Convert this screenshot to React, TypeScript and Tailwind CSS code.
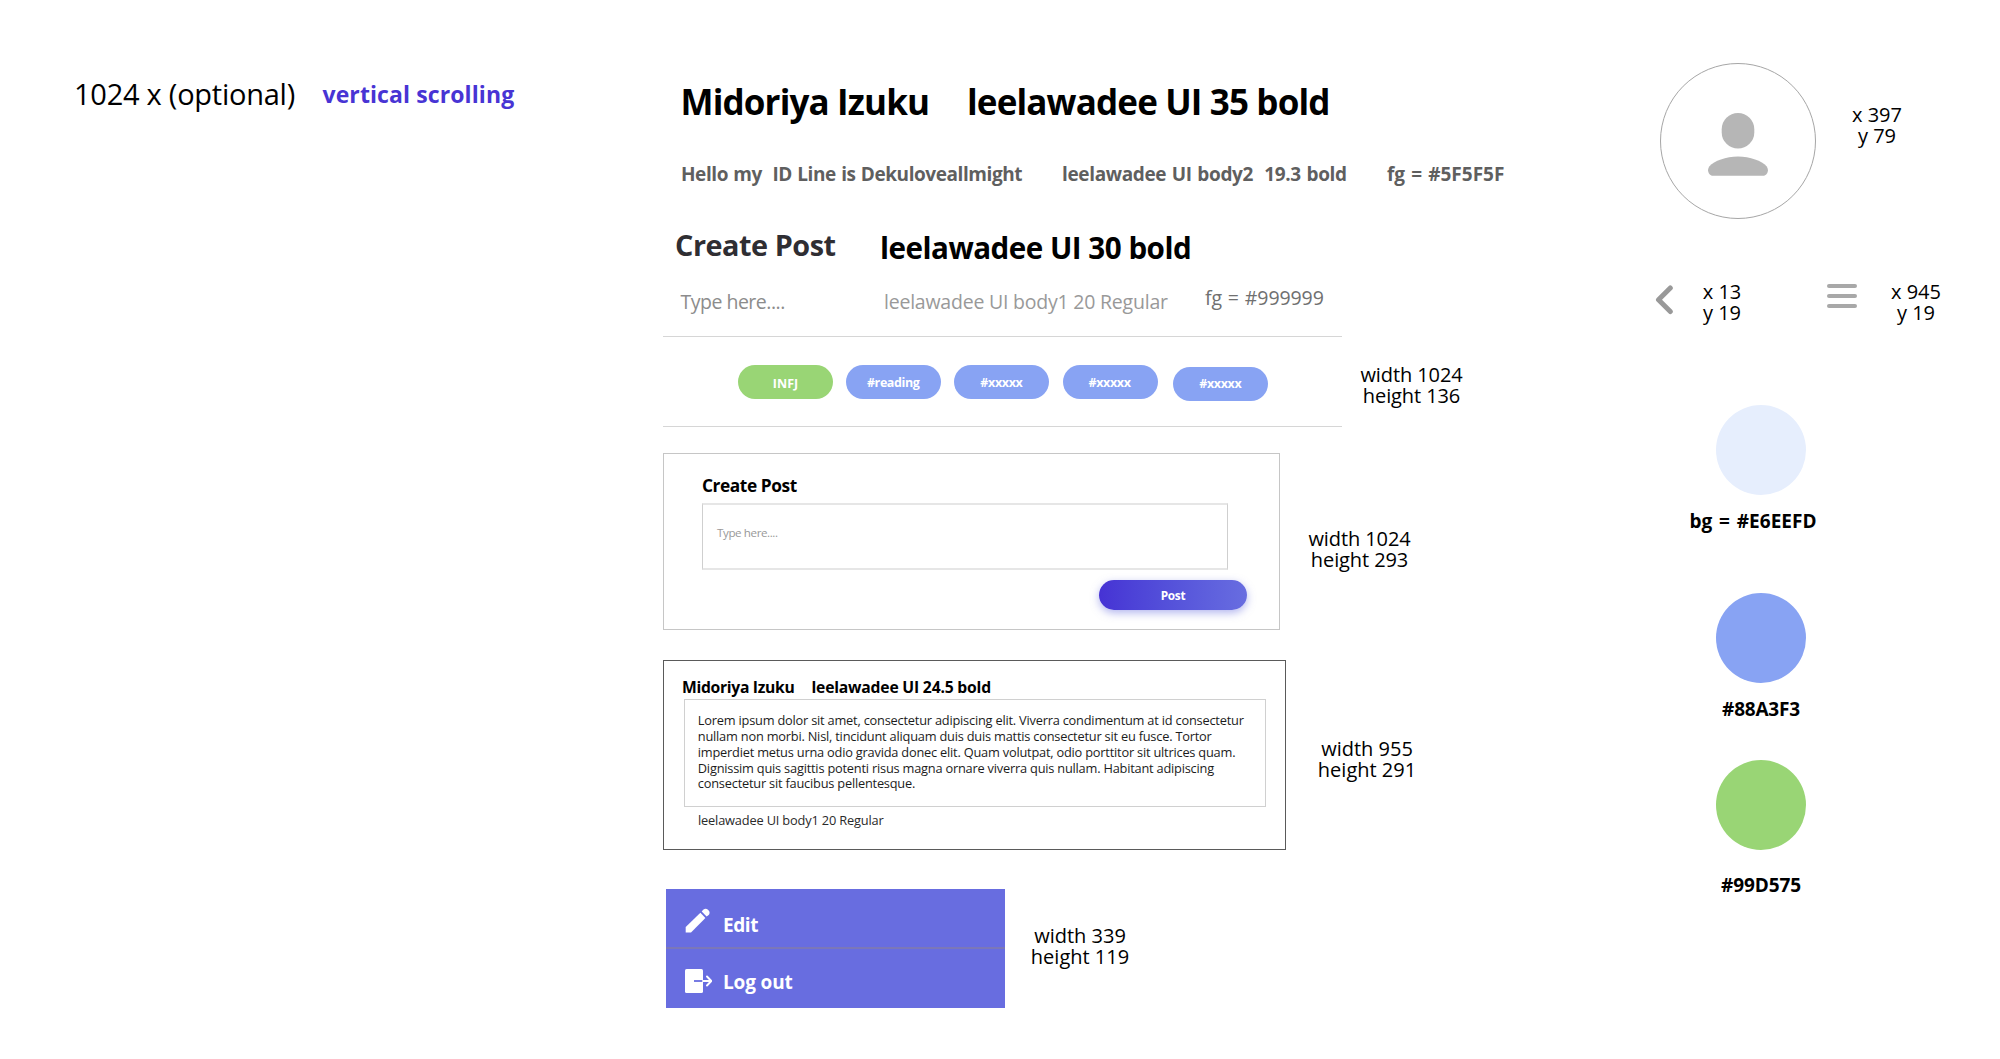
import React from "react";

function SizeNote({ lines, className }: { lines: string[]; className: string }) {
  return (
    <div
      className={`shrink-0 text-center text-[20px] leading-[21px] whitespace-pre text-black ${className}`}
    >
      {lines.map((line) => (
        <div key={line}>{line}</div>
      ))}
    </div>
  );
}

function Tag({ label, className }: { label: string; className: string }) {
  return (
    <div
      className={`flex h-[34px] w-[95px] shrink-0 justify-center rounded-full text-[12.5px] leading-[18px] font-bold text-white ${className}`}
    >
      {label}
    </div>
  );
}

function TypeSamples() {
  return (
    <div className="whitespace-pre">
      <div className="flex pt-[82px] pl-[17.5px] text-[35px] leading-[40px] font-bold text-black">
        <h1 className="w-[286.5px] shrink-0 tracking-[-0.85px]">Midoriya Izuku</h1>
        <p className="tracking-[-0.85px]">leelawadee UI 35 bold</p>
      </div>
      <div className="mt-[40px] flex pl-[18px] text-[19px] leading-[24px] font-bold text-[#5f5f5f]">
        <p className="w-[381px] shrink-0 tracking-[-0.43px] [word-spacing:0.8px]">Hello my  ID Line is Dekuloveallmight</p>
        <p className="w-[325px] shrink-0 tracking-[-0.35px] [word-spacing:1px]">leelawadee UI body2  19.3 bold</p>
        <p className="[word-spacing:1.2px]">fg = #5F5F5F</p>
      </div>
      <div className="mt-[43px] flex h-[36px] pl-[12px] leading-[32px] font-bold">
        <h2 className="w-[205px] shrink-0 text-[28.8px] tracking-[-0.45px] text-[#2f2e33]">Create Post</h2>
        <p className="mt-[3px] text-[29.6px] tracking-[-0.5px] text-black">leelawadee UI 30 bold</p>
      </div>
      <div className="mt-[21px] flex h-[50px] pl-[17.5px] text-[19.5px] leading-[24px]">
        <p className="mt-[4px] w-[203.5px] shrink-0 tracking-[-0.5px] text-[#8c8c8c]">Type here....</p>
        <p className="mt-[4px] w-[321px] shrink-0 tracking-[-0.22px] text-[#999999]">leelawadee UI body1 20 Regular</p>
        <p className="tracking-[-0.08px] text-[#707070] [word-spacing:0.9px]">fg = #999999</p>
      </div>
    </div>
  );
}

function TagRow() {
  return (
    <div className="flex">
      <div className="flex h-[91px] w-[679px] shrink-0 gap-[13.2px] border-y border-[#d6d6d6] pt-[28px] pl-[75px]">
        <Tag label="INFJ" className="bg-[#99d575] pt-[9.5px] tracking-[0.1px]" />
        <Tag label="#reading" className="bg-[#88a3f3] pt-[8.5px] pr-[1px] tracking-[-0.4px]" />
        <Tag label="#xxxxx" className="bg-[#88a3f3] pt-[8.5px] pr-[1px] tracking-[-0.35px]" />
        <Tag label="#xxxxx" className="bg-[#88a3f3] pt-[8.5px] pr-[1px] tracking-[-0.35px]" />
        <Tag label="#xxxxx" className="mt-[1.5px] ml-[2.5px] bg-[#88a3f3] pt-[8.5px] pr-[1px] tracking-[-0.35px]" />
      </div>
      <SizeNote lines={["width 1024", "height 136"]} className="mt-[27.5px] ml-[14.5px] w-[110px] tracking-[-0.1px]" />
    </div>
  );
}

function CreatePost() {
  return (
    <div className="mt-[26px] flex">
      <div className="flex h-[177px] w-[617px] shrink-0 flex-col border border-[#c6c6c6] pt-[21.5px] pl-[38px]">
        <h3 className="text-[17.3px] leading-[20px] font-bold tracking-[-0.42px] text-black">Create Post</h3>
        <div className="mt-[7.5px] h-[67px] w-[526px] border-x border-y-2 border-x-[#cfcfcf] border-y-[#e6e6e6] pt-[20px] pl-[14px] text-[11.6px] leading-[16px] tracking-[-0.4px] text-[#999999]">
          Type here....
        </div>
        <button className="mt-[10px] ml-[397px] h-[30px] w-[148px] rounded-full bg-linear-to-r from-[#4632d4] to-[#686de0] text-[11.8px] leading-[30px] font-bold tracking-[-0.25px] text-white shadow-[0_3px_8px_rgba(104,109,224,0.5)]">
          Post
        </button>
      </div>
      <SizeNote lines={["width 1024", "height 293"]} className="mt-[74.5px] ml-[24.5px] w-[110px] tracking-[-0.1px]" />
    </div>
  );
}

function PostCard() {
  return (
    <div className="mt-[30px] flex">
      <div className="h-[190px] w-[623px] shrink-0 border border-[#5a5a5a] whitespace-pre">
        <div className="flex h-[38px] pt-[16px] pl-[18px] text-[15.7px] leading-[20px] font-bold text-black">
          <h3 className="w-[129.5px] shrink-0 tracking-[-0.31px]">Midoriya Izuku</h3>
          <p className="tracking-[-0.2px]">leelawadee UI 24.5 bold</p>
        </div>
        <p className="ml-[20px] h-[108px] w-[582px] border border-[#d0d0d0] pt-[13.4px] pl-[12.8px] text-[12.8px] leading-[15.7px] tracking-[-0.21px] text-[#1c1c1c]">
          {"Lorem ipsum dolor sit amet, consectetur adipiscing elit. Viverra condimentum at id consectetur\n"}
          {"nullam non morbi. Nisl, tincidunt aliquam duis duis mattis consectetur sit eu fusce. Tortor\n"}
          {"imperdiet metus urna odio gravida donec elit. Quam volutpat, odio porttitor sit ultrices quam.\n"}
          {"Dignissim quis sagittis potenti risus magna ornare viverra quis nullam. Habitant adipiscing\n"}
          {"consectetur sit faucibus pellentesque."}
        </p>
        <p className="mt-[5px] ml-[34px] text-[12.8px] leading-[16px] tracking-[-0.17px] text-[#2a2a2a]">
          leelawadee UI body1 20 Regular
        </p>
      </div>
      <SizeNote lines={["width 955", "height 291"]} className="mt-[77.5px] ml-[26px] w-[110px]" />
    </div>
  );
}

function Menu() {
  return (
    <div className="mt-[39px] ml-[3px] flex">
      <div className="h-[119px] w-[339px] shrink-0 bg-[#686de0] text-[19px] leading-[24px] font-bold text-white">
        <div className="flex h-[60px] border-b-2 border-[#7b77b8] pl-[19px]">
          <svg className="mt-[19px] w-[25px] shrink-0" height="25" viewBox="0 0 25 25" fill="white">
            <path d="M.7 24.6V19L15.4 4.8l5 5.1L6 24.6z" />
            <path d="M16.7 3.6l1.5-1.9a3.9 3.9 0 0 1 5.5 5.4L21.6 8.6z" />
          </svg>
          <span className="mt-[24px] ml-[13px] tracking-[-0.4px]">Edit</span>
        </div>
        <div className="flex pl-[19px]">
          <svg className="mt-[20px] w-[27px] shrink-0" height="24" viewBox="0 0 27 24" fill="none">
            <rect width="18" height="24" rx="1.6" fill="white" />
            <path d="M9 12h9" stroke="#686de0" strokeWidth="1.8" />
            <path d="M18 12h8M22 7.5l4.3 4.5-4.3 4.5" stroke="white" strokeWidth="1.9" strokeLinecap="round" strokeLinejoin="round" />
          </svg>
          <span className="mt-[20.5px] ml-[11px] tracking-[-0.15px]">Log out</span>
        </div>
      </div>
      <SizeNote lines={["width 339", "height 119"]} className="mt-[35.5px] ml-[20px] w-[110px]" />
    </div>
  );
}

function Swatch({ label, circle, text }: { label: string; circle: string; text: string }) {
  return (
    <div className="flex w-[200px] flex-col items-center">
      <div className={`size-[90px] rounded-full ${circle}`} />
      <p className={`text-[19px] leading-[24px] font-bold whitespace-pre text-black ${text}`}>{label}</p>
    </div>
  );
}

function Assets() {
  return (
    <div>
      <div className="flex pt-[63px] pl-[20px]">
        <div className="flex size-[156px] shrink-0 justify-center rounded-full border border-[#a6a6a6]">
          <svg className="mt-[49px]" width="60" height="63" viewBox="0 0 60 63" fill="#b6b6b6">
            <rect x="13.7" y="0" width="32.6" height="35.6" rx="16.3" />
            <path d="M5 62.7c-4.5 0-6.5-6-3.5-9.5C6 48 18 43.5 30 43.5S54 48 58.5 53.2c3 3.500 1 9.500-3.500 9.500z" />
          </svg>
        </div>
        <SizeNote lines={["x 397", "y 79"]} className="mt-[40.5px] ml-[21px] w-[80px]" />
      </div>
      <div className="mt-[61px] flex h-[41px] pl-[13.5px]">
        <svg className="mt-[4px] shrink-0" width="20" height="31" viewBox="0 0 20 31" fill="none">
          <path d="M16.300 4L4.500 15.800l11.800 11.700" stroke="#999999" strokeWidth="5" strokeLinecap="round" strokeLinejoin="round" />
        </svg>
        <SizeNote lines={["x 13", "y 19"]} className="mt-[0.500px] ml-[8.500px] w-[80px]" />
        <svg className="mt-[3.500px] ml-[65px] shrink-0" width="30" height="24" viewBox="0 0 30 24" fill="#a8a8a8">
          <rect width="30" height="4" rx="2" />
          <rect y="10" width="30" height="4" rx="2" />
          <rect y="20" width="30" height="4" rx="2" />
        </svg>
        <SizeNote lines={["x 945", "y 19"]} className="mt-[0.500px] ml-[19px] w-[80px]" />
      </div>
      <div className="mt-[84px] pl-[21px]">
        <Swatch label="bg = #E6EEFD" circle="bg-[#e6eefd]" text="mt-[14px] mr-[16px] tracking-[0.05px] [word-spacing:1.800px]" />
        <div className="h-[60px]" />
        <Swatch label="#88A3F3" circle="bg-[#88a3f3]" text="mt-[14px] tracking-[-0.2px]" />
        <div className="h-[39px]" />
        <Swatch label="#99D575" circle="bg-[#99d575]" text="mt-[23px] tracking-[-0.1px]" />
      </div>
    </div>
  );
}

export default function App() {
  return (
    <main className="flex h-[1059px] w-[2000px] overflow-hidden bg-white font-['Open_Sans','Noto_Sans',sans-serif]">
      <div className="flex w-[663px] shrink-0 pt-[78px] pl-[74px] leading-[32px]">
        <p className="w-[248.500px] shrink-0 text-[29px] tracking-[-0.25px] text-black">1024 x (optional)</p>
        <p className="text-[23px] font-bold tracking-[0.1px] text-[#4834d4]">vertical scrolling</p>
      </div>
      <div className="w-[977px] shrink-0">
        <TypeSamples />
        <TagRow />
        <CreatePost />
        <PostCard />
        <Menu />
      </div>
      <Assets />
    </main>
  );
}
